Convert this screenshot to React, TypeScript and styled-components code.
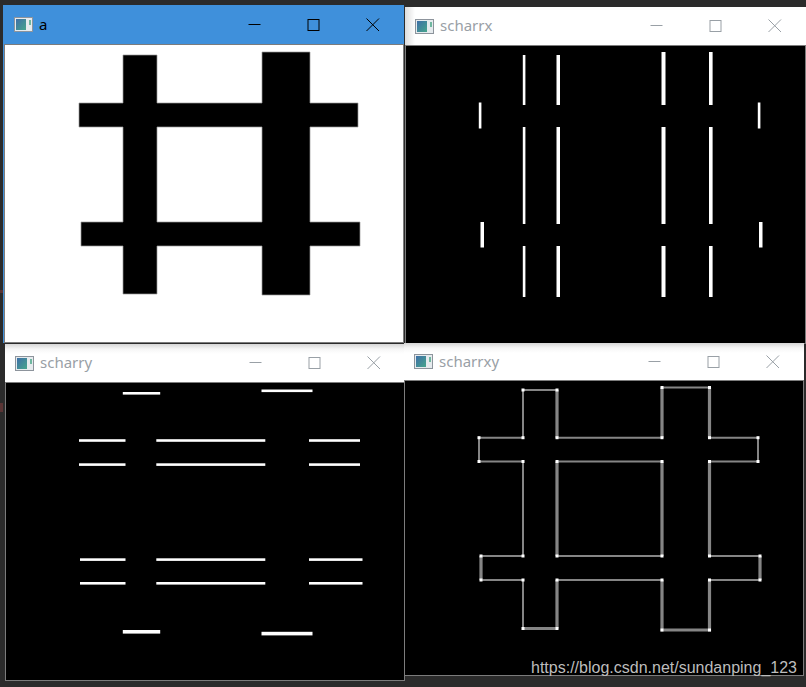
import React from "react";
import styled, { createGlobalStyle } from "styled-components";

const Global = createGlobalStyle`
  html, body { margin: 0; padding: 0; background: #2b2b2b; }
  #root { width: 806px; height: 687px; overflow: hidden; }
`;

const Desktop = styled.div`
  position: relative;
  width: 806px;
  height: 687px;
  background: #2b2b2b;
  overflow: hidden;
`;

const EditorMark = styled.span<{ $y: number; $h: number }>`
  position: absolute;
  left: 0;
  top: ${(p) => p.$y}px;
  width: 3px;
  height: ${(p) => p.$h}px;
  background: #5a3434;
`;

const Win = styled.section<{ $x: number; $y: number; $w: number; $h: number; $z: number; $frame?: string }>`
  position: absolute;
  left: ${(p) => p.$x}px;
  top: ${(p) => p.$y}px;
  width: ${(p) => p.$w}px;
  height: ${(p) => p.$h}px;
  z-index: ${(p) => p.$z};
  display: flex;
  flex-direction: column;
  background: ${(p) => p.$frame || "transparent"};
`;

const TitleBar = styled.header<{ $active?: boolean; $h: number; $shade?: boolean }>`
  height: ${(p) => p.$h}px;
  flex: none;
  display: flex;
  align-items: center;
  padding: 0 2px 0 ${(p) => (p.$active ? 11 : 10)}px;
  background: ${(p) =>
    p.$active
      ? "#3f90db"
      : p.$shade
      ? "linear-gradient(to bottom, #d6d6d6 0, #f6f6f6 5px, #fff 10px)"
      : "linear-gradient(to right, #dcdcdc 0, #fff 10px)"};
  color: ${(p) => (p.$active ? "#000" : "#99a0a6")};
`;

const AppIcon = styled.svg`
  width: 19px;
  height: 15px;
  flex: none;
  margin-right: 6px;
`;

const Title = styled.span`
  flex: 1;
  font: 15px/20px "Noto Sans", "Open Sans", sans-serif;
  position: relative;
  top: -1px;
`;

const Ctl = styled.svg`
  width: 59px;
  height: 14px;
  flex: none;
  fill: none;
  stroke: currentColor;
`;

const Content = styled.div<{ $bg: string; $inset?: number }>`
  flex: 1;
  min-height: 0;
  margin-left: ${(p) => p.$inset || 0}px;
  background: ${(p) => p.$bg};
  border: 1px solid #7c7c7c;
  box-sizing: border-box;
`;

const Drawing = styled.svg`
  display: block;
  width: 100%;
  height: 100%;
`;

const Watermark = styled.div`
  position: absolute;
  z-index: 9;
  right: 9px;
  top: 658px;
  font: 16px/20px "Liberation Sans", Arial, sans-serif;
  color: #bdbdbd;
  white-space: nowrap;
`;

type R = [number, number, number, number];

const Icon = () => (
  <AppIcon viewBox="0 0 19 15">
    <defs>
      <linearGradient id="ig" x1="0" y1="0" x2="1" y2="1">
        <stop offset="0" stopColor="#3f6fa8" />
        <stop offset="1" stopColor="#46a58c" />
      </linearGradient>
    </defs>
    <rect x="0.5" y="0.5" width="18" height="14" fill="#e6ebee" stroke="#8d949c" />
    <rect x="2" y="2" width="10" height="11" fill="url(#ig)" />
    <rect x="15" y="3" width="2" height="5" fill="#6fb7a0" />
  </AppIcon>
);

const Controls = () => (
  <>
    <Ctl viewBox="0 0 59 14">
      <path d="M23.5 6.5H35.5" />
    </Ctl>
    <Ctl viewBox="0 0 59 14">
      <rect x="24" y="1.5" width="11" height="11" />
    </Ctl>
    <Ctl viewBox="0 0 59 14">
      <path d="M23.5 0.5L36 13M36 0.5L23.5 13" />
    </Ctl>
  </>
);

const Rects = ({ items, fill = "#fff" }: { items: R[]; fill?: string }) => (
  <>
    {items.map(([x, y, w, h], i) => (
      <rect key={i} x={x} y={y} width={w} height={h} fill={fill} />
    ))}
  </>
);

const hashPath =
  "M123 55H157V103H262V52H310V103H358V127H310V222H360V246H310V295H262V246H157V294H123V246H81V222H123V127H79V103H123Z M157 127V222H262V127Z";

const xLines: R[] = [
  [522.8, 55, 2.6, 50],
  [556.5, 55, 3.5, 50],
  [661.5, 52, 4, 53],
  [709, 52, 3.6, 53],
  [478.8, 102.5, 2.6, 26],
  [757.8, 102.5, 2.6, 26],
  [522.8, 127, 2.6, 97],
  [556.5, 127, 3.5, 97],
  [661.5, 127, 4, 97],
  [709, 127, 3.6, 97],
  [480.5, 222, 3.5, 25.5],
  [759, 222, 3.5, 25.5],
  [522.8, 246, 2.6, 51],
  [556.5, 246, 3.5, 51],
  [661.5, 246, 4, 51],
  [709, 246, 3.6, 51],
];

const yLines: R[] = [
  [122.8, 392, 37.4, 2.6],
  [261.5, 389.5, 51, 2.6],
  [79, 439.2, 46.5, 2.6],
  [156.3, 439.2, 109, 2.6],
  [309, 439.2, 51, 2.6],
  [79, 463.3, 46.5, 2.6],
  [156.3, 463.3, 109, 2.6],
  [309, 463.3, 51, 2.6],
  [80, 558.3, 45.5, 2.6],
  [156.3, 558.3, 109, 2.6],
  [309, 558.3, 53.5, 2.6],
  [80, 582, 45.5, 2.6],
  [156.3, 582, 109, 2.6],
  [309, 582, 53.5, 2.6],
  [122.8, 630, 37.4, 3.6],
  [261.5, 631.8, 51, 3.6],
];

const thin =
  "M523 390H557 M523 390V437.7H479V461.5H523 M557 437.7H662 M557 461.5H662 M557 556H662 M709.5 437.7H758V461.5H709.5 M481 556H523 M481 580H523 M557 580H662 M709.5 556H760 M709.5 580H760 M662 387.5H709.5 M523 461.5V556 M523 580V628.5";
const thick =
  "M557 390V437.7 M662 387.5V437.7 M709.5 387.5V437.7 M662 461.5V556 M709.5 461.5V556 M662 580V630H709.5V580 M557 580V628.5 M523 628.5H557 M557 461.5V556 M760 556V580 M481 556V580";
const dots: [number, number][] = [
  [523, 390], [557, 390], [662, 387.5], [709.5, 387.5],
  [479, 437.7], [523, 437.7], [557, 437.7], [662, 437.7], [709.5, 437.7], [758, 437.7],
  [479, 461.5], [523, 461.5], [557, 461.5], [662, 461.5], [709.5, 461.5], [758, 461.5],
  [481, 556], [523, 556], [557, 556], [662, 556], [709.5, 556], [760, 556],
  [481, 580], [523, 580], [557, 580], [662, 580], [709.5, 580], [760, 580],
  [523, 628.5], [557, 628.5], [662, 630], [709.5, 630],
];

export default function App() {
  return (
    <Desktop>
      <Global />
      <EditorMark $y={290} $h={3} />
      <EditorMark $y={403} $h={9} />
      <Win $x={3} $y={5} $w={401} $h={338} $z={1} $frame="#3f90db">
        <TitleBar $active $h={39}>
          <Icon />
          <Title>a</Title>
          <Controls />
        </TitleBar>
        <Content $bg="#fff" $inset={1}>
          <Drawing viewBox="5 45 398 297">
            <path d={hashPath} fill="#000" fillRule="evenodd" stroke="#9a9a9a" strokeWidth="0.7" />
          </Drawing>
        </Content>
      </Win>

      <Win $x={405} $y={7} $w={401} $h={337} $z={2}>
        <TitleBar $h={38}>
          <Icon />
          <Title>scharrx</Title>
          <Controls />
        </TitleBar>
        <Content $bg="#000">
          <Drawing viewBox="406 46 399 297">
            <Rects items={xLines} />
          </Drawing>
        </Content>
      </Win>

      <Win $x={5} $y={344} $w={400} $h={337} $z={3}>
        <TitleBar $h={38} $shade>
          <Icon />
          <Title>scharry</Title>
          <Controls />
        </TitleBar>
        <Content $bg="#000">
          <Drawing viewBox="6 383 398 297">
            <Rects items={yLines} />
          </Drawing>
        </Content>
      </Win>

      <Win $x={404} $y={343} $w={400} $h={333} $z={4}>
        <TitleBar $h={37} $shade>
          <Icon />
          <Title>scharrxy</Title>
          <Controls />
        </TitleBar>
        <Content $bg="#000">
          <Drawing viewBox="405 381 398 294">
            <path d={thin} fill="none" stroke="#858585" strokeWidth="2" />
            <path d={thick} fill="none" stroke="#858585" strokeWidth="3.2" />
            {dots.map(([x, y], i) => (
              <rect key={i} x={x - 1.5} y={y - 1.5} width="3" height="3" fill="#fff" />
            ))}
          </Drawing>
        </Content>
      </Win>

      <Watermark>https://blog.csdn.net/sundanping_123</Watermark>
    </Desktop>
  );
}
